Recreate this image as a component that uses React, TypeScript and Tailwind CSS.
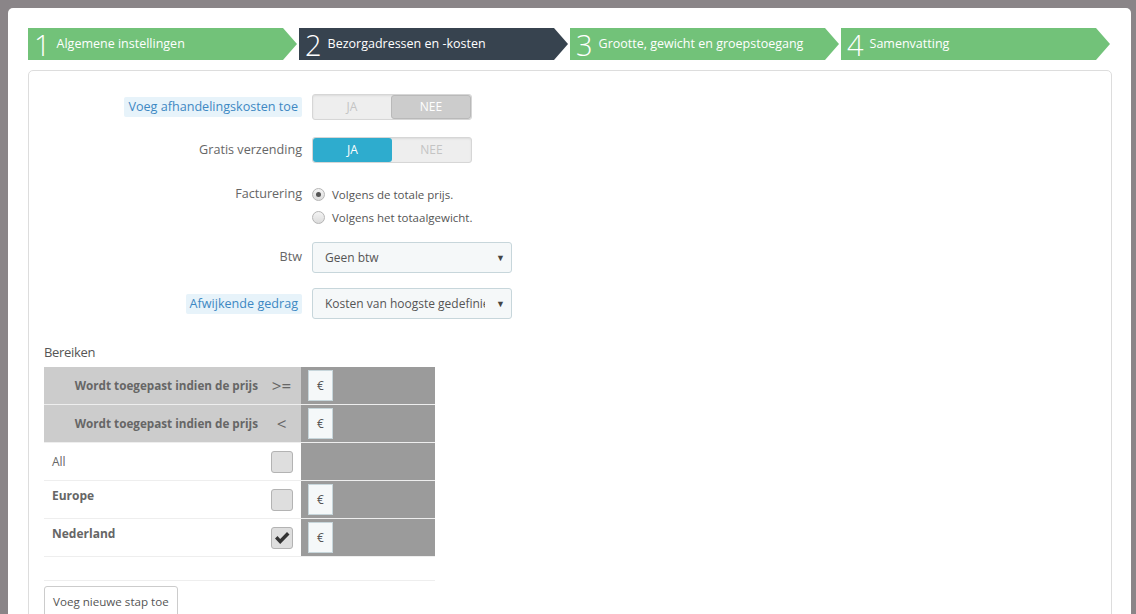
import React from 'react'
import clsx from 'clsx'

const steps = [
  { n: 1, t: 'Algemene instellingen' },
  { n: 2, t: 'Bezorgadressen en -kosten', active: true },
  { n: 3, t: 'Grootte, gewicht en groepstoegang' },
  { n: 4, t: 'Samenvatting' },
]

const Toggle = ({ value, tone }: { value: 'ja' | 'nee'; tone: 'blue' | 'gray' }) => (
  <div className="flex h-[26px] w-[160px] rounded-[3px] border border-[#d6d6d6] bg-[#eeeeee] text-[12px] uppercase shadow-[inset_0_1px_2px_rgba(0,0,0,0.08)]">
    <div
      className={clsx(
        'flex flex-1 items-center justify-center rounded-[3px]',
        value === 'ja' ? (tone === 'blue' ? 'bg-[#2eacce] text-white' : 'bg-[#cccccc] text-white') : 'text-[#c4c4c4]'
      )}
    >
      JA
    </div>
    <div
      className={clsx(
        'flex flex-1 items-center justify-center rounded-[3px]',
        value === 'nee' ? 'border border-[#b9b9b9] bg-[#cccccc] text-white' : 'text-[#c4c4c4]'
      )}
    >
      NEE
    </div>
  </div>
)

const Label = ({ text, hint }: { text: string; hint?: boolean }) => (
  <div className="flex w-[273px] shrink-0 justify-end text-[12.6px]">
    {hint ? (
      <span className="rounded-[2px] bg-[#e7f3fa] px-[4px] leading-[20px] text-[#3d88c3]">{text}</span>
    ) : (
      <span className="text-[#666666]">{text}</span>
    )}
  </div>
)

const Select = ({ value }: { value: string }) => (
  <div className="relative flex h-[31px] w-[200px] items-center rounded-[3px] border border-[#c7d6db] bg-[#f5f8f9] pl-[12px] text-[#555555]">
    <span className="w-[160px] overflow-hidden whitespace-nowrap">{value}</span>
    <span className="absolute right-[6px] top-[8px] text-[9px] text-[#444]">▼</span>
  </div>
)

const Radio = ({ checked, text }: { checked?: boolean; text: string }) => (
  <div className="flex h-[23px] items-center">
    <span className="flex h-[13px] w-[13px] items-center justify-center rounded-full border border-[#b5b5b5] bg-gradient-to-b from-[#f4f4f4] to-[#dcdcdc]">
      {checked && <span className="h-[5px] w-[5px] rounded-full bg-[#555]" />}
    </span>
    <span className="ml-[7px] text-[11.5px] text-[#555555]">{text}</span>
  </div>
)

const Euro = () => (
  <div className="flex h-[31px] w-[25px] items-center justify-center border border-[#c7d6db] bg-[#f5f8f9] text-[12px] text-[#555]">
    €
  </div>
)

const Check = ({ checked }: { checked?: boolean }) => (
  <div className="flex h-[22px] w-[22px] items-center justify-center rounded-[3px] border border-[#b3b3b3] bg-[#dedede]">
    {checked && (
      <svg width="16" height="14" viewBox="0 0 16 14">
        <path d="M1 7.5 L3.5 5 L6.2 8 L13 1 L15.5 3.5 L6.2 13 Z" fill="#333" />
      </svg>
    )}
  </div>
)

const App = () => {
  return (
    <div className="h-[614px] overflow-hidden bg-[#8a8588] pl-2 pr-[5px] pt-2 font-['Open_Sans',sans-serif] text-[12px]">
      <div className="h-[640px] rounded-t-[5px] bg-white pl-5 pr-[19px] pt-5">
        <div className="flex h-8">
          {steps.map((s) => (
            <div
              key={s.n}
              className={clsx(
                'flex w-1/4 items-center pl-[6px] text-white [clip-path:polygon(0_0,calc(100%_-_16px)_0,calc(100%_-_2px)_50%,calc(100%_-_16px)_100%,0_100%)]',
                s.active ? 'bg-[#37434f]' : 'bg-[#72c279]'
              )}
            >
              <span className="text-[29px] font-light leading-none">{s.n}</span>
              <span className="ml-[6px] text-[12.5px]">{s.t}</span>
            </div>
          ))}
        </div>

        <div className="mt-[10px] h-[600px] rounded-[5px] border border-[#dddddd] px-[15px] pt-[23px]">
          <div className="-ml-[15px] flex flex-col">
            <div className="flex items-center gap-[10px]">
              <Label text="Voeg afhandelingskosten toe" hint />
              <Toggle value="nee" tone="gray" />
            </div>
            <div className="mt-[17px] flex items-center gap-[10px]">
              <Label text="Gratis verzending" />
              <Toggle value="ja" tone="blue" />
            </div>
            <div className="mt-[20px] flex items-start gap-[10px]">
              <div className="flex h-[23px] items-center">
                <Label text="Facturering" />
              </div>
              <div>
                <Radio checked text="Volgens de totale prijs." />
                <Radio text="Volgens het totaalgewicht." />
              </div>
            </div>
            <div className="mt-[13px] flex items-center gap-[10px]">
              <Label text="Btw" />
              <Select value="Geen btw" />
            </div>
            <div className="mt-[15px] flex items-center gap-[10px]">
              <Label text="Afwijkende gedrag" hint />
              <Select value="Kosten van hoogste gedefinieerde bereik" />
            </div>
          </div>

          <div className="mt-[23px] text-[13px] leading-[20px] tracking-[-0.3px] text-[#555]">Bereiken</div>

          <div className="mt-[5px] w-[391px]">
            {['>=', '<'].map((op) => (
              <div key={op} className="flex h-[38px] border-b border-[#eeeeee]">
                <div className="flex flex-1 items-center justify-end bg-[#cccccc] pr-[4px] text-[11.7px] font-bold text-[#666]">
                  Wordt toegepast indien de prijs
                </div>
                <div className="flex w-[39px] items-center justify-center bg-[#cccccc] text-[17px] text-[#666]">
                  {op}
                </div>
                <div className="flex w-[134px] items-center bg-[#9b9b9b] pl-[7px]">
                  <Euro />
                </div>
              </div>
            ))}
            {[
              { name: 'All', bold: false, checked: false, euro: false },
              { name: 'Europe', bold: true, checked: false, euro: true },
              { name: 'Nederland', bold: true, checked: true, euro: true },
            ].map((r) => (
              <div key={r.name} className="flex h-[38px] border-b border-[#eeeeee]">
                <div
                  className={clsx(
                    'flex flex-1 pl-[8px] text-[#666]',
                    r.bold ? 'pt-[6px] font-bold' : 'items-center'
                  )}
                >
                  {r.name}
                </div>
                <div className="flex w-[39px] items-center justify-center">
                  <Check checked={r.checked} />
                </div>
                <div className="flex w-[134px] items-center bg-[#9b9b9b] pl-[7px]">{r.euro && <Euro />}</div>
              </div>
            ))}
          </div>

          <div className="mt-[23px] w-[391px] border-t border-[#eeeeee] pt-[5px]">
            <button className="h-[31px] rounded-[3px] border border-[#cccccc] bg-white px-[8px] text-[11.6px] text-[#555]">
              Voeg nieuwe stap toe
            </button>
          </div>
        </div>
      </div>
    </div>
  )
}

export default App
